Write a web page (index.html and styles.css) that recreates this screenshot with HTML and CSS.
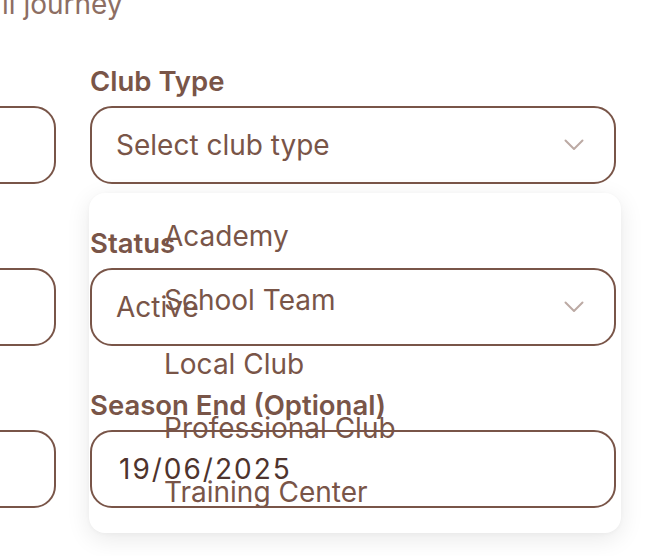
FILE: index.html
```html
<!DOCTYPE html>
<html>
<head>
<meta charset="utf-8">
<link rel="stylesheet" href="styles.css">
</head>
<body>
<div class="page">
  <p class="intro">ll journey</p>
  <div class="form">
    <div class="field">
      <div class="label">&nbsp;</div>
      <div class="input left"></div>
    </div>
    <div class="field anchor">
      <div class="label">Club Type</div>
      <div class="input select">
        <span class="placeholder">Select club type</span>
        <svg class="chev" width="20" height="12" viewBox="0 0 20 12"><path d="M1.5 1.5 L10 10 L18.5 1.5" fill="none" stroke="#bcaaa4" stroke-width="2" stroke-linecap="round" stroke-linejoin="round"/></svg>
      </div>
      <ul class="menu">
        <li>Academy</li>
        <li>School Team</li>
        <li>Local Club</li>
        <li>Professional Club</li>
        <li>Training Center</li>
      </ul>
    </div>
    <div class="field">
      <div class="label">&nbsp;</div>
      <div class="input left"></div>
    </div>
    <div class="field">
      <div class="label">Status</div>
      <div class="input select">
        <span class="value">Active</span>
        <svg class="chev" width="20" height="12" viewBox="0 0 20 12"><path d="M1.5 1.5 L10 10 L18.5 1.5" fill="none" stroke="#bcaaa4" stroke-width="2" stroke-linecap="round" stroke-linejoin="round"/></svg>
      </div>
    </div>
    <div class="field">
      <div class="label">&nbsp;</div>
      <div class="input left"></div>
    </div>
    <div class="field">
      <div class="label">Season End (Optional)</div>
      <div class="input">
        <span class="date">19/06/2025</span>
      </div>
    </div>
  </div>
</div>
</body>
</html>
```

FILE: styles.css
```css
html, body {
  margin: 0;
  padding: 0;
  background: #ffffff;
  overflow: hidden;
}
body {
  font-family: Inter, "Noto Sans", sans-serif;
  color: #795548;
}
.page {
  width: 660px;
  height: 556px;
  overflow: hidden;
}
.intro {
  margin: -12px 0 0 0;
  padding-left: 2px;
  font-size: 28px;
  line-height: 32px;
  color: #8d6e63;
  white-space: nowrap;
}
.form {
  position: relative;
  z-index: 0;
  display: grid;
  grid-template-columns: 56px 526px;
  column-gap: 34px;
  row-gap: 46px;
  margin-top: 48px;
}
.field {
  display: flex;
  flex-direction: column;
  gap: 12px;
  min-width: 0;
}
.anchor {
  position: relative;
}
.label {
  font-size: 27.5px;
  line-height: 26px;
  font-weight: 600;
  color: #795548;
  white-space: nowrap;
}
.input {
  box-sizing: border-box;
  height: 78px;
  border: 2px solid #795548;
  border-radius: 22px;
  display: flex;
  align-items: center;
  padding: 0 30px 0 24px;
  background: transparent;
}
.input.left {
  margin-left: -300px;
  width: 356px;
}
.select {
  justify-content: space-between;
}
.placeholder, .value {
  font-size: 28px;
  color: #795548;
}
.date {
  font-size: 28px;
  letter-spacing: 2px;
  color: #4e342e;
  padding-left: 3px;
}
.chev {
  display: block;
}
.menu {
  position: absolute;
  z-index: -1;
  top: 125px;
  left: -1px;
  width: 532px;
  margin: 0;
  padding: 11px 0 9px;
  list-style: none;
  background: #ffffff;
  border-radius: 16px;
  box-shadow: 0 6px 24px rgba(0, 0, 0, 0.09), 0 1px 4px rgba(0, 0, 0, 0.03);
}
.menu li {
  height: 64px;
  display: flex;
  align-items: center;
  padding-left: 75px;
  font-size: 28px;
  color: #795548;
}
```
